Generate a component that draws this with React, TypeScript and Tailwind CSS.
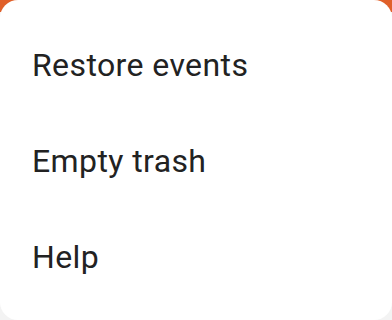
const items = ['Restore events', 'Empty trash', 'Help'];

export default function App() {
  return (
    <div className="w-[392px] h-[320px] bg-[linear-gradient(to_bottom,#e0602a_0px,#e0602a_12px,#f3f3f3_12px)]">
      <div className="h-full w-full rounded-[18px] bg-white pt-[17px]">
        {items.map((label) => (
          <div
            key={label}
            className="h-[96px] flex items-center px-[32px] text-[32px] tracking-[0.4px] text-[#222222] font-['Roboto',sans-serif]"
          >
            {label}
          </div>
        ))}
      </div>
    </div>
  );
}
